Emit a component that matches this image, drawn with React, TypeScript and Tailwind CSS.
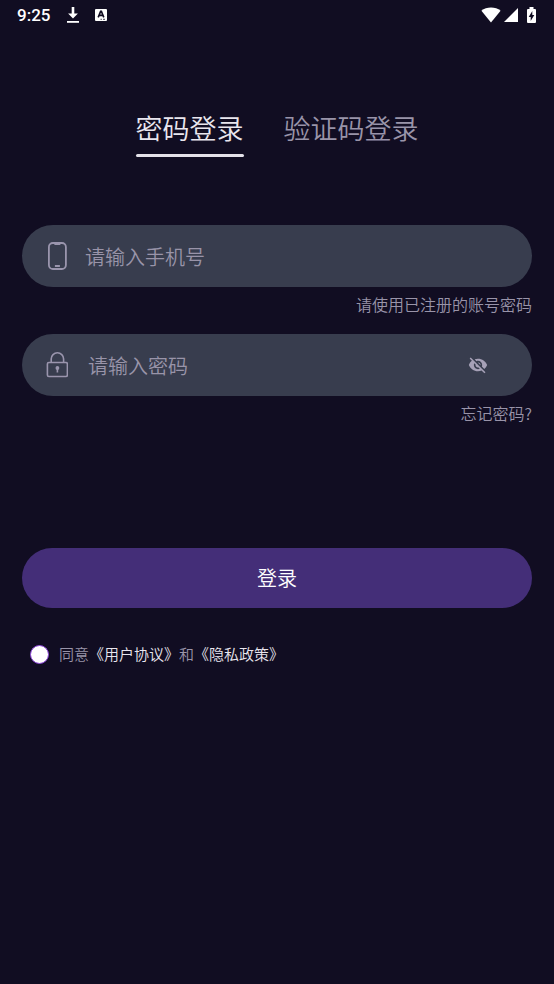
import { useState } from "react";

const tabs = [
  { id: "password", label: "密码登录" },
  { id: "code", label: "验证码登录" },
];

const StatusBar = () => (
  <div className="flex h-[30px] items-center justify-between pr-4 pl-[17px] text-white">
    <div className="flex items-center gap-4">
      <span className="font-[Roboto] text-[17px] leading-6 font-medium">9:25</span>
      <div className="flex items-center gap-3.5">
        <svg width="14" height="18" viewBox="0 0 14 18" fill="currentColor" aria-hidden="true">
          <path d="M5.700 1h2.600v6.600h3.600L7 12.600 2.100 7.600h3.600z" />
          <path d="M1 15h12v1.800H1z" />
        </svg>
        <svg width="14" height="14" viewBox="0 0 14 14" aria-hidden="true">
          <rect x="1" y="1" width="12" height="12" rx="1" fill="currentColor" />
          <path d="M4.200 9.400 6.600 3.400h.8l2.400 6M5.200 7.400h3.600" fill="none" stroke="#110d22" strokeWidth="1.600" />
          <path d="M6.500 11.300h1.400M9 11.300h2" stroke="#110d22" strokeWidth=".8" />
        </svg>
      </div>
    </div>
    <div className="flex items-center gap-2">
      <div className="flex items-center gap-[3px]">
        <svg width="20" height="16" viewBox="0 0 20 16" fill="currentColor" aria-hidden="true">
          <path d="M10 15.500.4 3.800C3 1.600 6.300.5 10 .5s7 1.100 9.600 3.300z" />
        </svg>
        <svg width="14" height="16" viewBox="0 0 14 16" fill="currentColor" aria-hidden="true">
          <path d="M14 1v14H0z" />
        </svg>
      </div>
      <svg width="12" height="18" viewBox="8 0 12 18" aria-hidden="true">
        <path d="M11.500 1h4v2H17q1 0 1 1v12q0 1-1 1h-7q-1 0-1-1V4q0-1 1-1h1.500z" fill="currentColor" />
        <path d="M14.300 5v4h2L12.700 15v-4h-2z" fill="#110d22" />
      </svg>
    </div>
  </div>
);

const PhoneIcon = () => (
  <svg width="20" height="28" viewBox="0 0 20 28" fill="none" stroke="#9a95ad" strokeWidth="1.800" aria-hidden="true">
    <rect x="1.900" y="1" width="17" height="26" rx="4" />
    <path d="M7.400 2.200h6M7.900 24h5" strokeWidth="1.800" />
  </svg>
);

const LockIcon = () => (
  <svg width="22" height="28" viewBox="0 0 22 28" fill="none" stroke="#9a95ad" strokeWidth="1.600" aria-hidden="true">
    <rect x="1.400" y="11.500" width="20" height="14" rx="1.500" />
    <path d="M5.200 11.500V8a6.200 6.200 0 0 1 12.400 0v3.500" />
    <circle cx="11.400" cy="17" r="1.900" fill="#9a95ad" stroke="none" />
    <path d="M11.400 17.500v4" />
  </svg>
);

const EyeOffIcon = () => (
  <svg width="20" height="20" viewBox="0 0 24 24" fill="#a6a1b7" aria-hidden="true">
    <path d="M12 7c2.760 0 5 2.240 5 5 0 .65-.13 1.260-.36 1.830l2.920 2.920c1.510-1.260 2.700-2.890 3.430-4.750-1.730-4.390-6-7.500-11-7.500-1.400 0-2.740.25-3.980.7l2.160 2.160C10.740 7.130 11.350 7 12 7zM2 4.270l2.280 2.280.46.46C3.080 8.300 1.780 10.020 1 12c1.730 4.390 6 7.500 11 7.500 1.550 0 3.030-.3 4.380-.84l.42.42L19.730 22 21 20.730 3.270 3 2 4.270zM7.530 9.800l1.550 1.550c-.05.21-.08.43-.08.65 0 1.660 1.340 3 3 3 .22 0 .44-.03.65-.08l1.550 1.550c-.67.33-1.410.53-2.200.53-2.760 0-5-2.240-5-5 0-.79.2-1.530.53-2.200zm4.310-.78l3.150 3.150.02-.16c0-1.660-1.340-3-3-3l-.17.01z" />
  </svg>
);

export default function App() {
  const [tab, setTab] = useState("password");
  const [visible, setVisible] = useState(false);
  const [agreed, setAgreed] = useState(false);

  return (
    <main className="min-h-screen bg-[#110d22] font-['Noto_Sans_CJK_SC',sans-serif] font-[350] text-[#9994a9]">
      <StatusBar />

      <form className="px-[22px] pt-[78px]" onSubmit={(e) => e.preventDefault()}>
        <div className="flex justify-center gap-10" role="tablist">
          {tabs.map((item) => (
            <button
              key={item.id}
              type="button"
              role="tab"
              aria-selected={tab === item.id}
              onClick={() => setTab(item.id)}
              className={`flex flex-col gap-1.5 text-[27px] leading-10 ${tab === item.id ? "text-[#e9e6ee]" : ""}`}
            >
              {item.label}
              <span className={`h-[3px] w-full rounded-full ${tab === item.id ? "bg-[#e4e1e9]" : ""}`} />
            </button>
          ))}
        </div>

        <label className="mt-[68px] flex h-[62px] items-center gap-[18px] rounded-full bg-[#383d4e] pr-6 pl-[25px]">
          <PhoneIcon />
          <input
            type="tel"
            aria-label="手机号"
            placeholder="请输入手机号"
            className="min-w-0 flex-1 pt-0.5 text-[20px] leading-8 outline-none placeholder:text-[#9994a9]"
          />
        </label>
        <p className="mt-[5px] text-right text-base leading-6">请使用已注册的账号密码</p>

        <div className="mt-[18px] flex h-[62px] items-center gap-5 rounded-full bg-[#383d4e] pr-11 pl-6">
          <LockIcon />
          <input
            type={visible ? "text" : "password"}
            aria-label="密码"
            placeholder="请输入密码"
            className="min-w-0 flex-1 pt-0.5 text-[20px] leading-8 outline-none placeholder:text-[#9994a9]"
          />
          <button type="button" aria-label="显示密码" onClick={() => setVisible((prev) => !prev)}>
            <EyeOffIcon />
          </button>
        </div>
        <div className="mt-[5px] text-right text-base leading-6">
          <a href="#forgot">忘记密码?</a>
        </div>

        <button type="submit" className="mt-[123px] h-[60px] w-full rounded-full bg-[#442e78] text-[20px] leading-8 text-white">
          登录
        </button>

        <div className="mt-[34px] flex items-center gap-2.5 pl-2 text-[15px] leading-6">
          <input
            id="agree"
            type="checkbox"
            checked={agreed}
            onChange={(e) => setAgreed(e.target.checked)}
            className="size-[19px] appearance-none rounded-full border border-[#8d46d8] bg-white checked:bg-[#8d46d8]"
          />
          <p>
            <label htmlFor="agree">同意</label>
            <a href="#terms" className="text-[#e9e6ee]">《用户协议》</a>
            和
            <a href="#privacy" className="text-[#e9e6ee]">《隐私政策》</a>
          </p>
        </div>
      </form>
    </main>
  );
}
